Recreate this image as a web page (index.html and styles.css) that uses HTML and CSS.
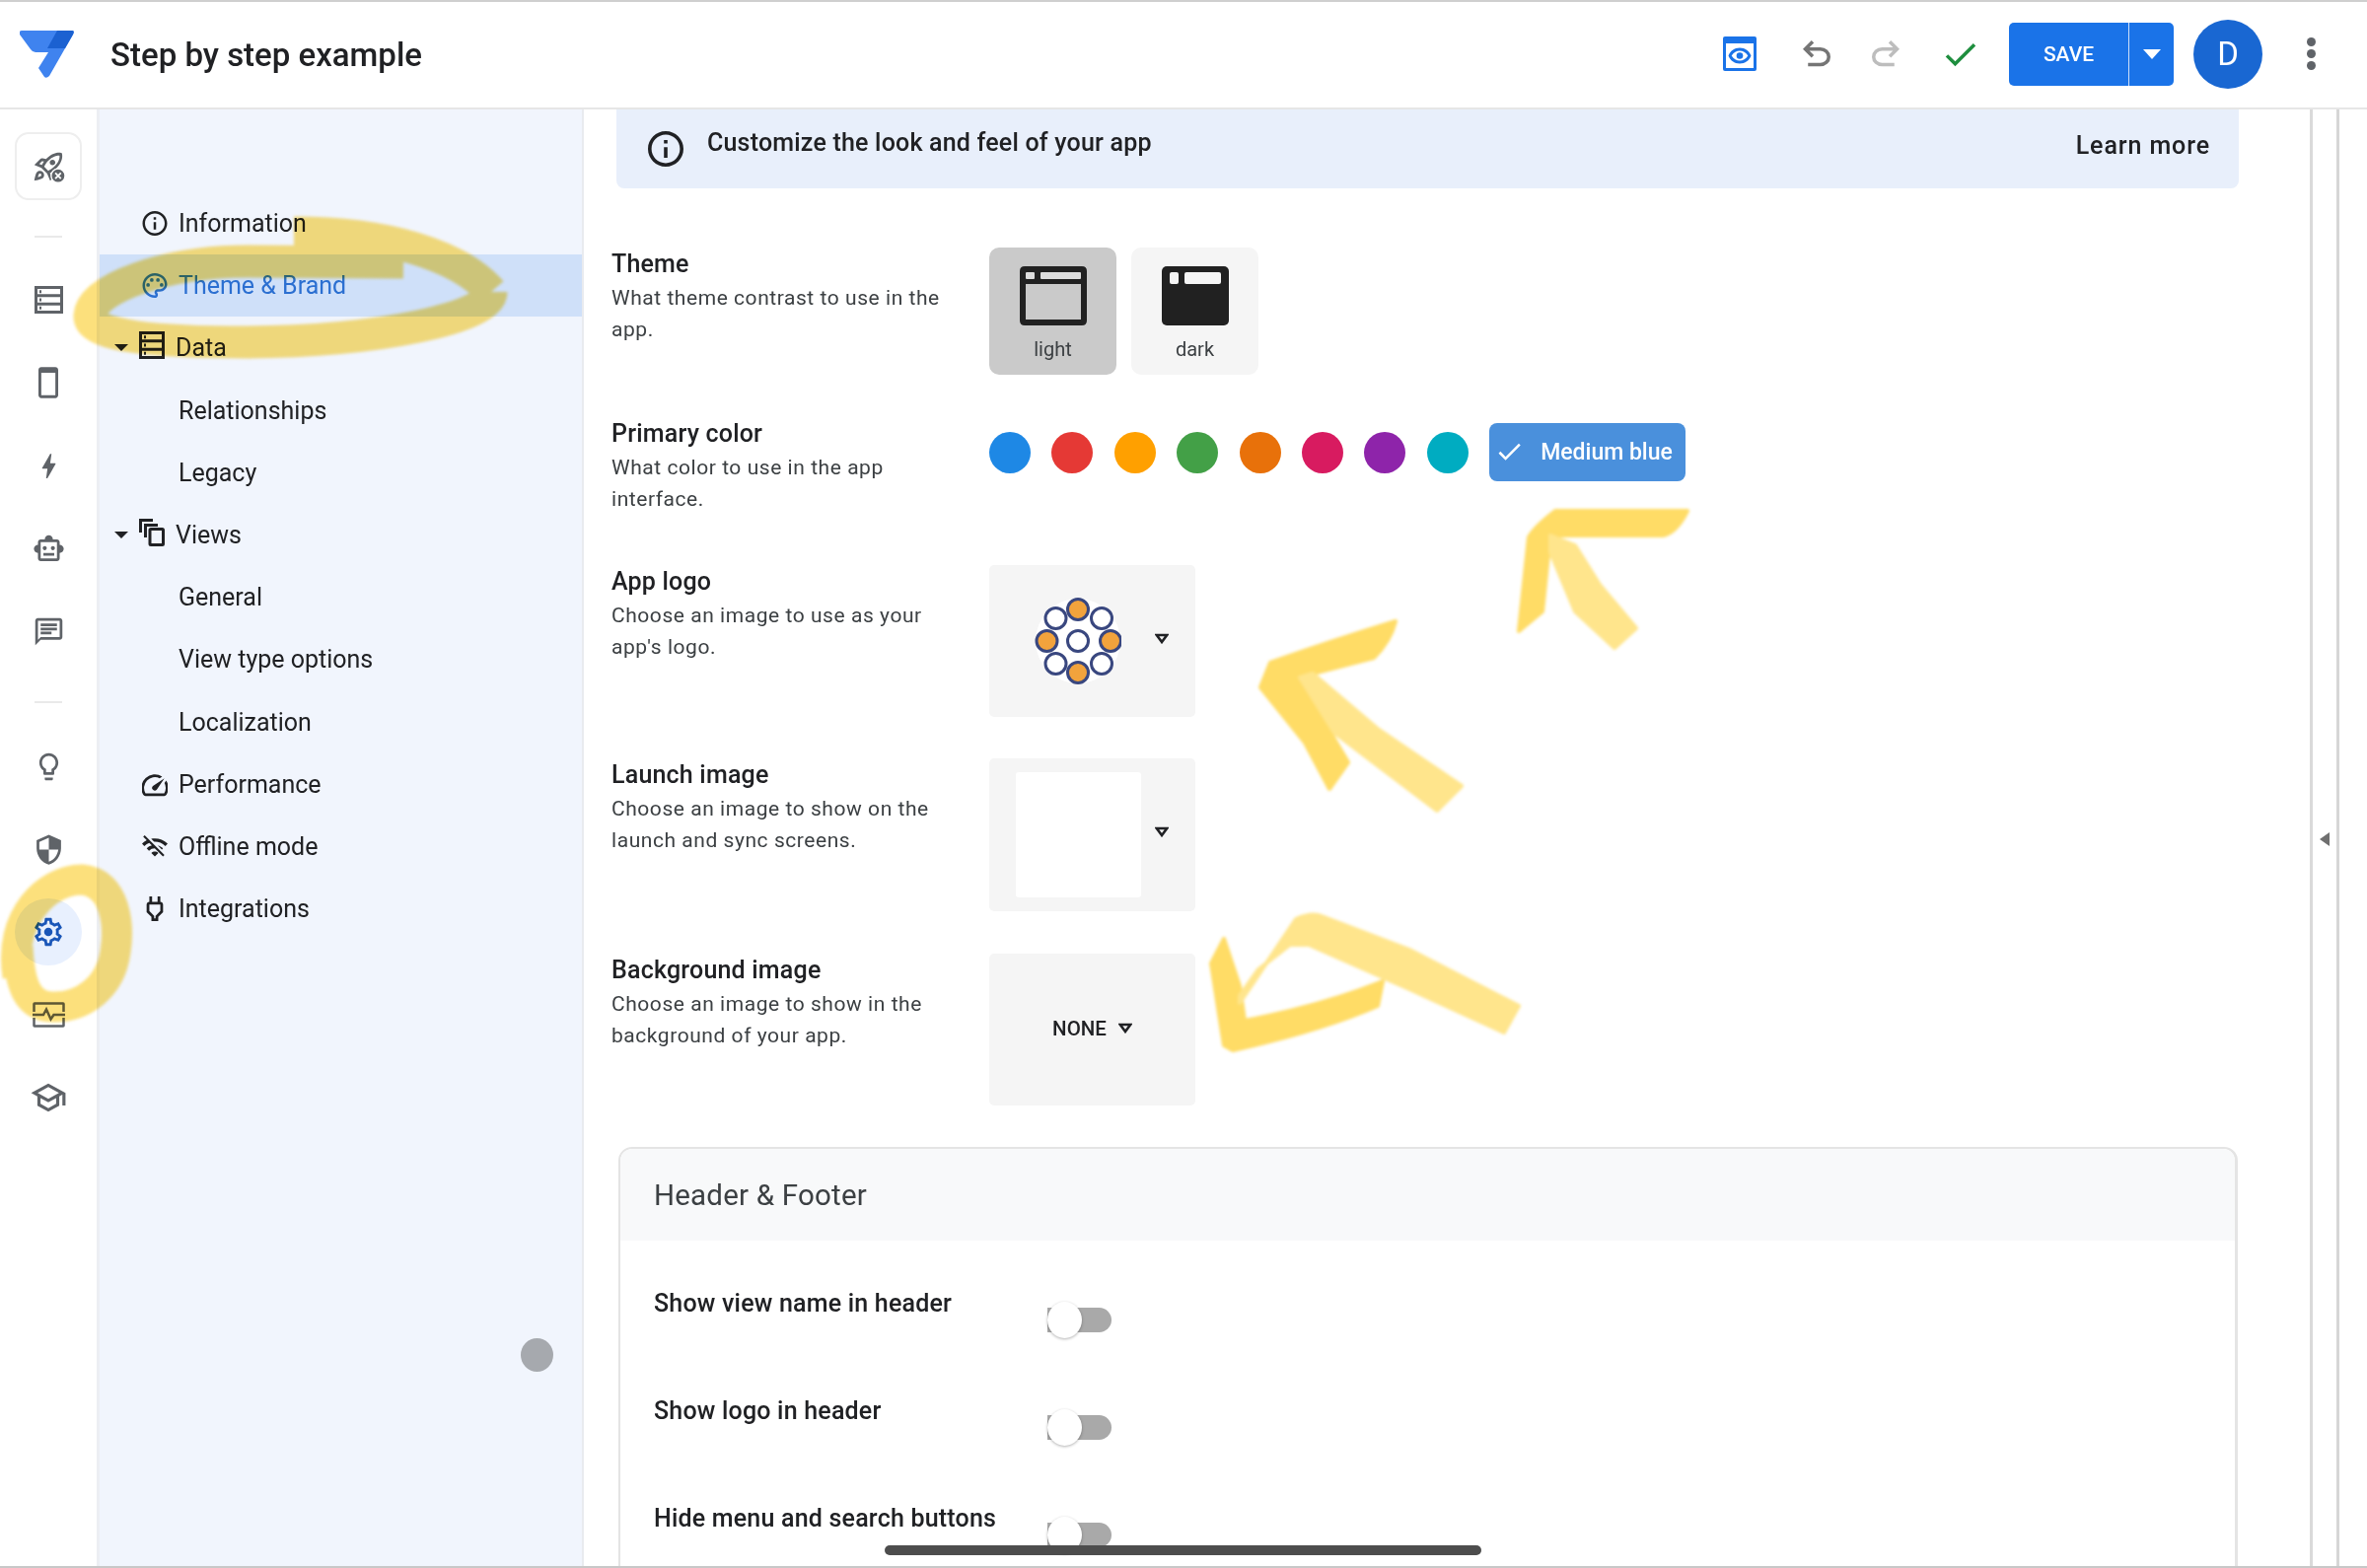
FILE: index.html
```html
<!DOCTYPE html>
<html>
<head>
<meta charset="utf-8">
<title>Step by step example</title>
<link rel="stylesheet" href="styles.css">
</head>
<body>

<!-- start:topbar -->
<div class="topbar">
	<svg class="logo" viewBox="20 32 56 49">
		<path fill="#3f83ef" d="M22 32H73Q76 32 74 36L50 78Q47 81 45 79L39 70L49 54H36Q33 54 31 51L20 36Q19 32 22 32Z"/>
		<path fill="#1b61d1" d="M58 32H73Q76 32 74 36L66 50H48Z"/>
	</svg>
	<div class="app_title">Step by step example</div>
	<div class="top_actions">
		<svg class="preview" viewBox="0 0 34 35">
			<rect width="34" height="35" rx="2" fill="#1a73e8"/>
			<rect x="3" y="7" width="28" height="25" fill="#fff"/>
			<path fill="#1a73e8" d="M17 11.5c-5.5 0-9.6 3.2-11.5 8 1.900 4.800 6 8 11.500 8s9.600-3.200 11.500-8c-1.900-4.800-6-8-11.500-8zm0 13c-3.200 0-6.200-1.800-8.300-5 2.100-3.200 5.100-5 8.300-5s6.200 1.800 8.300 5c-2.100 3.200-5.100 5-8.300 5z"/>
			<circle cx="17" cy="19.500" r="3.300" fill="#1a73e8"/>
		</svg>
		<svg class="undo" viewBox="0 -960 960 960"><path d="M280-200v-80h284q63 0 109.500-40T720-420q0-60-46.500-100T564-560H312l104 104-56 56-200-200 200-200 56 56-104 104h252q97 0 166.500 63T800-420q0 94-69.500 157T564-200H280Z"/></svg>
		<svg class="redo" viewBox="0 -960 960 960"><path d="M396-200q-97 0-166.500-63T160-420q0-94 69.500-157T396-640h252L544-744l56-56 200 200-200 200-56-56 104-104H396q-63 0-109.500 40T240-420q0 60 46.500 100T396-280h284v80H396Z"/></svg>
		<svg class="saved" viewBox="3 5 19 15"><path d="M9 16.170L4.830 12l-1.420 1.410L9 19 21 7l-1.410-1.410z"/></svg>
		<div class="save_btn">
			<span class="save_label">SAVE</span>
			<span class="save_drop"><i class="tri_down"></i></span>
		</div>
		<div class="avatar">D</div>
		<div class="more"><i></i><i></i><i></i></div>
	</div>
</div>
<!-- end:topbar -->

<div class="layout">

	<!-- start:rail -->
	<div class="rail">
		<div class="rail_btn">
			<svg class="rocket" viewBox="0 0 24 24">
				<path d="M6 15c-.83 0-1.580.34-2.120.88C2.700 17.060 2 22 2 22s4.940-.7 6.120-1.880c.54-.54.88-1.290.88-2.120 0-1.660-1.340-3-3-3zm.71 3.710c-.28.28-2.170.76-2.170.76s.47-1.880.76-2.170c.17-.19.42-.3.7-.3.55 0 1 .45 1 1 0 .28-.11.53-.29.71zm10.710-5.060c6.360-6.360 4.240-11.310 4.240-11.310S16.710.22 10.350 6.580l-2.490-.5c-.65-.13-1.330.08-1.810.55L2 10.690l5 2.140L11.170 17l2.140 5 4.050-4.050c.47-.47.68-1.150.55-1.810l-.49-2.490zM7.410 10.830l-1.910-.82 1.970-1.970 1.440.29c-.57.83-1.080 1.700-1.500 2.500zm6.580 7.670l-.82-1.910c.8-.42 1.670-.93 2.490-1.500l.29 1.440-1.960 1.970zM16 12.240c-1.320 1.320-3.380 2.400-4.040 2.730l-2.930-2.930c.32-.65 1.400-2.710 2.730-4.040 4.680-4.680 8.230-3.850 8.230-3.850s.83 3.550-3.990 8.090zM15 11c1.100 0 2-.9 2-2s-.9-2-2-2-2 .9-2 2 .9 2 2 2z"/>
				<circle cx="19" cy="18.500" r="5" fill="#5f6368" stroke="#fff"/>
				<path d="M17 16.500l4 4m0-4l-4 4" stroke="#fff" stroke-width="1.300"/>
			</svg>
		</div>
		<div class="rail_sep first"></div>
		<div class="rail_item"><svg class="ic_line" viewBox="0 0 29 28"><path d="M1.500 1.500h26v25h-26zM1.500 9.800h26M1.500 18.200h26"/><path class="dots" d="M5 5.700h2M5 14h2M5 22.300h2"/></svg></div>
		<div class="rail_item"><svg class="ic phone" viewBox="5 1 14 22"><path d="M17 1.010L7 1c-1.100 0-2 .9-2 2v18c0 1.100.9 2 2 2h10c1.100 0 2-.9 2-2V3c0-1.100-.9-1.990-2-1.990zM17 21H7V5h10v16z"/></svg></div>
		<div class="rail_item"><svg class="ic" viewBox="0 0 24 24"><path d="M11 21h-1l1-7H7.500c-.58 0-.57-.32-.38-.66.19-.34.05-.08.07-.12C8.480 10.940 10.420 7.540 13 3h1l-1 7h3.500c.49 0 .56.33.47.51l-.07.15C12.960 17.550 11 21 11 21z"/></svg></div>
		<div class="rail_item"><svg class="ic" viewBox="0 0 24 24"><path d="M20 9V7c0-1.100-.9-2-2-2h-3c0-1.660-1.340-3-3-3S9 3.340 9 5H6c-1.100 0-2 .9-2 2v2c-1.660 0-3 1.340-3 3s1.340 3 3 3v4c0 1.100.9 2 2 2h12c1.100 0 2-.9 2-2v-4c1.660 0 3-1.340 3-3s-1.340-3-3-3zm-2 10H6V7h12v12zm-9-6c-.83 0-1.500-.67-1.500-1.500S8.170 10 9 10s1.500.67 1.500 1.500S9.830 13 9 13zm7.500-1.500c0 .83-.67 1.500-1.500 1.500s-1.500-.67-1.500-1.500.67-1.500 1.500-1.500 1.500.67 1.500 1.500zM8 15h8v2H8v-2z"/></svg></div>
		<div class="rail_item"><svg class="ic" viewBox="0 0 24 24"><path d="M20 2H4c-1.100 0-2 .9-2 2v18l4-4h14c1.100 0 2-.9 2-2V4c0-1.100-.9-2-2-2zm0 14H6l-2 2V4h16v12zM6 6h12v2H6zm0 3h12v2H6zm0 3h8v2H6z"/></svg></div>
		<div class="rail_sep"></div>
		<div class="rail_item"><svg class="ic" viewBox="0 0 24 24"><path d="M9 21c0 .55.45 1 1 1h4c.55 0 1-.45 1-1v-1H9v1zm3-19C8.140 2 5 5.140 5 9c0 2.380 1.190 4.470 3 5.740V17c0 .55.45 1 1 1h6c.55 0 1-.45 1-1v-2.260c1.810-1.270 3-3.360 3-5.740 0-3.860-3.140-7-7-7zm2.850 11.100l-.85.6V16h-4v-2.300l-.85-.6C7.800 12.160 7 10.630 7 9c0-2.760 2.240-5 5-5s5 2.240 5 5c0 1.630-.8 3.160-2.150 4.100z"/></svg></div>
		<div class="rail_item"><svg class="ic" viewBox="0 0 24 24"><path d="M12 1L3 5v6c0 5.550 3.840 10.740 9 12 5.160-1.260 9-6.450 9-12V5l-9-4zm0 10.990h7c-.53 4.120-3.280 7.790-7 8.940V12H5V6.300l7-3.110v8.800z"/></svg></div>
		<div class="rail_item">
			<div class="rail_active">
				<svg class="ic gear" viewBox="0 0 24 24">
					<path d="M19.430 12.980c.04-.32.07-.64.07-.98 0-.34-.03-.66-.07-.98l2.110-1.650c.19-.15.24-.42.12-.64l-2-3.460c-.09-.16-.26-.25-.44-.25-.06 0-.12.01-.17.03l-2.490 1c-.52-.4-1.080-.73-1.690-.98l-.38-2.650C14.460 2.180 14.250 2 14 2h-4c-.25 0-.46.18-.49.42l-.38 2.650c-.61.25-1.170.59-1.690.98l-2.490-1c-.06-.02-.12-.03-.18-.03-.17 0-.34.09-.43.25l-2 3.460c-.13.22-.07.49.12.64l2.110 1.650c-.04.32-.07.65-.07.98 0 .33.03.66.07.98l-2.110 1.650c-.19.15-.24.42-.12.64l2 3.460c.09.16.26.25.44.25.06 0 .12-.01.17-.03l2.490-1c.52.4 1.080.73 1.690.98l.38 2.650c.03.24.24.42.49.42h4c.25 0 .46-.18.49-.42l.38-2.650c.61-.25 1.170-.59 1.690-.98l2.490 1c.06.02.12.03.18.03.17 0 .34-.09.43-.25l2-3.460c.12-.22.07-.49-.12-.64l-2.110-1.650zm-1.980-1.710c.04.31.05.52.05.73 0 .21-.02.43-.05.73l-.14 1.130.89.7 1.080.84-.7 1.210-1.270-.51-1.040-.42-.9.68c-.43.32-.84.56-1.250.73l-1.060.43-.16 1.130-.2 1.350h-1.400l-.19-1.350-.16-1.130-1.060-.43c-.43-.18-.83-.41-1.230-.71l-.91-.7-1.060.43-1.270.51-.7-1.210 1.080-.84.89-.7-.14-1.130c-.03-.31-.05-.54-.05-.74s.02-.43.05-.73l.14-1.130-.89-.7-1.080-.84.7-1.210 1.270.51 1.040.42.9-.68c.43-.32.84-.56 1.250-.73l1.060-.43.16-1.130.2-1.350h1.390l.19 1.350.16 1.130 1.060.43c.43.18.83.41 1.230.71l.91.7 1.060-.43 1.270-.51.7 1.210-1.070.85-.89.7.14 1.130z"/>
					<circle cx="12" cy="12" r="3"/>
				</svg>
			</div>
		</div>
		<div class="rail_item"><svg class="ic_line wide" viewBox="0 0 33 26"><path d="M1.500 10V2q0-.5.5-.5h29q.5 0 .5.5v8M1.500 16v8q0 .5.5.5h29q.5 0 .5-.5v-8M0 13h11l3-5.500 4.500 10 3-4.500H33"/></svg></div>
		<div class="rail_item"><svg class="ic school" viewBox="0 0 24 24"><path d="M12 3L1 9l4 2.180v6L12 21l7-3.820v-6l2-1.090V17h2V9L12 3zm6.820 6L12 12.720 5.180 9 12 5.280 18.820 9zM17 15.990l-5 2.730-5-2.730v-3.720L12 15l5-2.730v3.720z"/></svg></div>
	</div>
	<!-- end:rail -->

	<!-- start:nav -->
	<div class="nav">
		<div class="nav_row">
			<svg class="nav_ic" viewBox="2 2 20 20"><path d="M11 7h2v2h-2zm0 4h2v6h-2zm1-9C6.480 2 2 6.480 2 12s4.480 10 10 10 10-4.480 10-10S17.520 2 12 2zm0 18c-4.410 0-8-3.590-8-8s3.590-8 8-8 8 3.590 8 8-3.590 8-8 8z"/></svg>
			Information
		</div>
		<div class="nav_row selected">
			<svg class="nav_ic" viewBox="2 2 20 20"><path d="M12 22C6.490 22 2 17.510 2 12S6.490 2 12 2s10 4.040 10 9c0 3.310-2.690 6-6 6h-1.770c-.28 0-.5.22-.5.5 0 .12.05.23.13.33.41.47.64 1.060.64 1.670 0 1.380-1.120 2.500-2.500 2.500zm0-18c-4.410 0-8 3.590-8 8s3.590 8 8 8c.28 0 .5-.22.5-.5 0-.16-.08-.28-.14-.35-.41-.46-.63-1.050-.63-1.650 0-1.380 1.120-2.500 2.500-2.500H16c2.210 0 4-1.790 4-4 0-3.860-3.590-7-8-7z"/><circle cx="6.500" cy="11.500" r="1.500"/><circle cx="9.500" cy="7.500" r="1.500"/><circle cx="14.500" cy="7.500" r="1.500"/><circle cx="17.500" cy="11.500" r="1.500"/></svg>
			Theme &amp; Brand
		</div>
		<div class="nav_row group">
			<i class="caret"></i>
			<svg class="group_ic" viewBox="0 0 26 28"><path d="M1.500 1.500h23v25h-23zM1.500 9.800h23M1.500 18.200h23"/><path class="dots" d="M5 5.700h2M5 14h2M5 22.300h2"/></svg>
			Data
		</div>
		<div class="nav_row sub">Relationships</div>
		<div class="nav_row sub">Legacy</div>
		<div class="nav_row group">
			<i class="caret"></i>
			<svg class="group_ic" viewBox="0 0 26 28"><path d="M1.500 14V1.500H14M6.500 19V6.500H19M12 10.500h11.500q1 0 1 1v14q0 1-1 1H12q-1 0-1-1v-14q0-1 1-1z"/></svg>
			Views
		</div>
		<div class="nav_row sub">General</div>
		<div class="nav_row sub">View type options</div>
		<div class="nav_row sub">Localization</div>
		<div class="nav_row">
			<svg class="nav_ic" viewBox="2.500 3 19 17"><path d="M20.380 8.570l-1.230 1.850a8 8 0 0 1-.22 7.580H5.070A8 8 0 0 1 15.580 6.850l1.850-1.230A10 10 0 0 0 3.350 19a2 2 0 0 0 1.720 1h13.850a2 2 0 0 0 1.740-1 10 10 0 0 0-.27-10.440zm-9.790 6.840a2 2 0 0 0 2.830 0l5.660-8.490-8.490 5.660a2 2 0 0 0 0 2.830z"/></svg>
			Performance
		</div>
		<div class="nav_row">
			<svg class="nav_ic" viewBox="1 2 22 19"><path d="M22.990 9C19.150 5.160 13.800 3.760 8.840 4.780l2.520 2.520c3.470-.17 6.990 1.050 9.630 3.700l2-2zm-4 4c-1.290-1.290-2.840-2.130-4.490-2.560l3.530 3.530.96-.97zM2 3.050L5.070 6.100C3.600 6.820 2.220 7.780 1 9l1.990 2c1.240-1.240 2.670-2.160 4.200-2.770l2.240 2.240C7.810 10.890 6.270 11.730 5 13v.01L6.990 15c1.360-1.360 3.140-2.040 4.920-2.060L18.980 20l1.270-1.260L3.290 1.790 2 3.050zM9 17l3 3 3-3c-1.650-1.660-4.340-1.660-6 0z"/></svg>
			Offline mode
		</div>
		<div class="nav_row">
			<svg class="nav_ic" viewBox="3 3 18 18"><path d="M16 7V3h-2v4h-4V3H8v4h-.01C6.900 6.990 6 7.890 6 8.980v5.520L9.500 18v3h5v-3l3.500-3.500V9c0-1.100-.9-2-2-2zm0 6.670l-3.500 3.510V19h-1v-1.820L8 13.670V9h8v4.670z"/></svg>
			Integrations
		</div>
		<div class="nav_handle"></div>
	</div>
	<!-- end:nav -->

	<!-- start:main -->
	<div class="main">
		<div class="banner">
			<svg class="banner_ic" viewBox="2 2 20 20"><path d="M11 7h2v2h-2zm0 4h2v6h-2zm1-9C6.480 2 2 6.480 2 12s4.480 10 10 10 10-4.480 10-10S17.520 2 12 2zm0 18c-4.410 0-8-3.590-8-8s3.590-8 8-8 8 3.590 8 8-3.590 8-8 8z"/></svg>
			<span class="banner_text">Customize the look and feel of your app</span>
			<span class="learn">Learn more</span>
		</div>

		<div class="setting theme_row">
			<div class="setting_text">
				<h2>Theme</h2>
				<p>What theme contrast to use in the app.</p>
			</div>
			<div class="theme_opts">
				<div class="theme_opt on">
					<svg class="theme_ic" viewBox="0 0 68 60">
						<path fill="#212121" fill-rule="evenodd" d="M5 0h58q5 0 5 5v50q0 5-5 5H5q-5 0-5-5V5q0-5 5-5zM6 18v36h56V18z"/>
						<rect x="6" y="6" width="9" height="7" rx="1" fill="#ddd"/><rect x="21" y="6" width="41" height="7" rx="1" fill="#ddd"/>
					</svg>
					<span>light</span>
				</div>
				<div class="theme_opt">
					<svg class="theme_ic" viewBox="0 0 68 60">
						<rect width="68" height="60" rx="5" fill="#212121"/>
						<rect x="8" y="6" width="9" height="12" rx="2" fill="#f5f5f5"/><rect x="23" y="6" width="37" height="12" rx="2" fill="#f5f5f5"/>
					</svg>
					<span>dark</span>
				</div>
			</div>
		</div>

		<div class="setting color_row">
			<div class="setting_text">
				<h2>Primary color</h2>
				<p>What color to use in the app interface.</p>
			</div>
			<div class="swatches">
				<i class="swatch c1"></i><i class="swatch c2"></i><i class="swatch c3"></i><i class="swatch c4"></i>
				<i class="swatch c5"></i><i class="swatch c6"></i><i class="swatch c7"></i><i class="swatch c8"></i>
				<div class="color_pick">
					<svg class="pick_ic" viewBox="3 5 19 15"><path d="M9 16.170L4.830 12l-1.420 1.410L9 19 21 7l-1.410-1.410z"/></svg>
					Medium blue
				</div>
			</div>
		</div>

		<div class="setting logo_row">
			<div class="setting_text">
				<h2>App logo</h2>
				<p>Choose an image to use as your app's logo.</p>
			</div>
			<div class="img_box">
				<svg class="dots_logo" viewBox="0 0 88 88">
					<circle cx="44" cy="44" r="43" fill="#fff"/>
					<g stroke="#39477f" stroke-width="3" fill="#fff">
						<circle cx="44" cy="12" r="10.500" class="dot_on"/>
						<circle cx="21.500" cy="21" r="10.500"/>
						<circle cx="68" cy="21" r="10.500"/>
						<circle cx="12.500" cy="44" r="10.500" class="dot_on"/>
						<circle cx="44" cy="44" r="10.500"/>
						<circle cx="77" cy="44" r="10.500" class="dot_on"/>
						<circle cx="21.500" cy="67" r="10.500"/>
						<circle cx="68" cy="67" r="10.500"/>
						<circle cx="44" cy="76" r="10.500" class="dot_on"/>
					</g>
				</svg>
				<svg class="drop" viewBox="0 0 16 12"><path d="M2 2h12L8 10z"/></svg>
			</div>
		</div>

		<div class="setting launch_row">
			<div class="setting_text">
				<h2>Launch image</h2>
				<p>Choose an image to show on the launch and sync screens.</p>
			</div>
			<div class="img_box">
				<div class="blank_img"></div>
				<svg class="drop" viewBox="0 0 16 12"><path d="M2 2h12L8 10z"/></svg>
			</div>
		</div>

		<div class="setting bg_row">
			<div class="setting_text">
				<h2>Background image</h2>
				<p>Choose an image to show in the background of your app.</p>
			</div>
			<div class="img_box center">
				<span class="none">NONE</span>
				<svg class="drop" viewBox="0 0 16 12"><path d="M2 2h12L8 10z"/></svg>
			</div>
		</div>

		<div class="card">
			<div class="card_head">Header &amp; Footer</div>
			<div class="card_body">
				<div class="toggle_row"><span>Show view name in header</span><div class="toggle"></div></div>
				<div class="toggle_row"><span>Show logo in header</span><div class="toggle"></div></div>
				<div class="toggle_row"><span>Hide menu and search buttons</span><div class="toggle"></div></div>
			</div>
		</div>
	</div>
	<!-- end:main -->

	<div class="side_panel"><i class="tri_left"></i></div>
	<div class="side_rest"></div>
</div>

<div class="h_scroll"></div>

<!-- marker strokes drawn over the screenshot -->
<svg class="marker" viewBox="0 0 2400 1590">
	<g fill="none" class="ink" stroke-width="33">
		<path d="M298 236C390 236 465 258 498 296"/>
		<path d="M498 296C498 322 385 346 250 347C165 347 90 342 91 320C93 292 170 265 250 265L409 266"/>
		<path d="M18 990C8 930 48 892 83 892C118 895 121 940 117 965C112 1002 83 1022 53 1021C28 1020 20 1000 18 960" stroke-width="31"/>
	</g>
	<g class="ink_fill">
		<path d="M1711 518H1577Q1555 535 1550 545L1540 640L1564 620L1572 543H1686Q1700 540 1711 518Z"/>
		<path d="M1415 630Q1350 650 1288 672L1278 697L1323 753L1348 800L1367 773L1316 687L1393 667Q1410 650 1415 630Z"/>
		<path d="M1241 952L1228 977L1241 1060L1250 1065Q1340 1045 1397 1020L1402 995Q1340 1020 1262 1035L1257 1000Z"/>
	</g>
	<g class="ink_fill light">
		<path d="M1572 543L1597 553L1622 593L1659 637L1637 657L1597 620L1572 560Z"/>
		<path d="M1318 687L1353 743L1457 822L1482 797L1398 740L1331 683Z"/>
		<path d="M1257 1017L1314 932Q1330 925 1340 929L1429 963L1540 1020L1525 1047L1429 1003L1327 958H1308L1276 983L1257 1010Z"/>
	</g>
</svg>

</body>
</html>
```

FILE: styles.css
```css
* {box-sizing: border-box;}
html, body {margin: 0; padding: 0; height: 100%;}
body {position: relative; width: 2400px; height: 1590px; overflow: hidden; background: #fff; border-top: 2px solid #cfcfcf; border-bottom: 2px solid #c8c8c8; font-family: Roboto, "Liberation Sans", sans-serif; color: #202124;}
i {display: block;}
h2, p {margin: 0;}

/* ---------- TOP BAR ---------- */
.topbar {display: flex; align-items: center; height: 109px; border-bottom: 2px solid #e6e6e6;}
.logo {width: 56px; height: 49px; margin-left: 20px; flex: none;}
.app_title {margin: 0 0 0 36px; font-size: 33px; font-weight: 500; letter-spacing: 0; color: #202124;}
.top_actions {display: flex; align-items: center; margin-left: auto; height: 100%;}
.preview {width: 34px; height: 35px; margin-top: -2px;}
.undo, .redo {width: 42px; height: 42px; margin-top: -1px;}
.undo {fill: #757575; margin-left: 40px;}
.redo {fill: #bdbdbd; margin-left: 28px;}
.saved {width: 33px; height: 26px; margin-left: 39px; fill: #1e8e3e;}
.save_btn {display: flex; height: 64px; width: 167px; margin: -2px 0 0 32px; background: #1a73e8; border-radius: 5px; color: #fff;}
.save_label {width: 122px; line-height: 64px; text-align: center; font-size: 21px; font-weight: 500; border-right: 1px solid #cfe0f9;}
.save_drop {flex: 1; display: flex; align-items: center; justify-content: center;}
.tri_down {width: 0; height: 0; border-left: 9px solid transparent; border-right: 9px solid transparent; border-top: 10px solid #fff;}
.avatar {width: 70px; height: 70px; margin: -2px 0 0 20px; border-radius: 50%; background: #1967d2; color: #fff; font-size: 33px; line-height: 70px; text-align: center;}
.more {display: flex; flex-direction: column; gap: 3px; margin: -2px 52px 0 45px;}
.more i {width: 9px; height: 9px; border-radius: 50%; background: #5f6368;}

/* ---------- STRUCTURE ---------- */
.layout {display: flex; height: 1477px;}
.rail {width: 98px; flex: none; padding-top: 23px; display: flex; flex-direction: column; align-items: center;}
.nav {position: relative; width: 494px; flex: none; padding-top: 84px; background: #f1f5fd; border-left: 3px solid #eceef3; border-right: 2px solid #e9ebef;}
.main {width: 1753px; flex: none; padding-left: 28px; overflow: hidden; border-right: 3px solid #dadada;}
.side_panel {width: 27px; flex: none; display: flex; align-items: center; justify-content: center; padding-top: 3px; border-right: 3px solid #d6d6d6;}
.side_rest {flex: 1;}
.tri_left {width: 0; height: 0; border-top: 7px solid transparent; border-bottom: 7px solid transparent; border-right: 10px solid #6f6f6f;}

/* ---------- RAIL ---------- */
.rail_btn {width: 68px; height: 69px; border: 2px solid #eeeeee; border-radius: 14px; display: flex; align-items: center; justify-content: center;}
.rocket {width: 34px; height: 34px; fill: #5f6368;}
.rail_sep {width: 28px; height: 2px; margin: 29px 0 22px; background: #e9e9e9;}
.rail_sep.first {margin: 36px 0 21px;}
.rail_item {height: 84px; width: 100%; display: flex; align-items: center; justify-content: center;}
.ic {width: 33px; height: 33px; fill: #5f6368;}
.phone {width: 20px; height: 32px;}
.school {width: 38px; height: 38px;}
.ic_line {width: 29px; height: 28px; fill: none; stroke: #5f6368; stroke-width: 3;}
.ic_line.wide {width: 33px; height: 26px; stroke-width: 2.500;}
.rail_active {width: 68px; height: 68px; border-radius: 50%; background: #e8f0fe; display: flex; align-items: center; justify-content: center;}
.gear {width: 34px; height: 34px; fill: #1a56b8;}

/* ---------- NAV ---------- */
.nav_row {display: flex; align-items: center; height: 63.200px; padding-left: 43px; font-size: 25px; color: #202124;}
.nav_ic {width: 26px; height: 25px; margin-right: 11px; fill: #202124;}
.nav_row.selected {background: #cfe0f9; color: #2b6fd1;}
.nav_row.selected .nav_ic {fill: #2b6fd1;}
.nav_row.sub {padding-left: 80px;}
.nav_row.group {padding-left: 15px;}
.caret {width: 0; height: 0; margin-right: 12px; border-left: 7px solid transparent; border-right: 7px solid transparent; border-top: 7px solid #202124;}
.group_ic {width: 26px; height: 28px; margin: -6px 11px 0 -1px; fill: none; stroke: #202124; stroke-width: 3;}
.nav_handle {position: absolute; left: 427px; top: 1246px; width: 33px; height: 34px; border-radius: 50%; background: #a6a9ae;}

/* ---------- BANNER ---------- */
.banner {display: flex; align-items: center; width: 1645px; height: 80px; margin: 0 0 60px 5px; padding: 0 29px 0 32px; background: #e8effb; border-radius: 0 0 8px 8px; font-size: 25px; font-weight: 500; color: #202124;}
.banner_ic {width: 36px; height: 36px; margin-right: 24px; fill: #202124;}
.banner_text {margin-top: -13px; letter-spacing: .2px;}
.learn {margin: -7px 0 0 auto; letter-spacing: .9px;}

/* ---------- SETTINGS ---------- */
.setting {display: flex; margin-bottom: 42px;}
.theme_row {height: 130px;}
.color_row {height: 108px;}
.logo_row {height: 154px;}
.launch_row {height: 156px;}
.bg_row {height: 154px;}
.setting_text {width: 383px; flex: none; padding-right: 20px;}
.setting_text h2 {margin-bottom: 1px; font-size: 25px; font-weight: 500; line-height: 34px; letter-spacing: .2px; color: #202124;}
.setting_text p {font-size: 21px; line-height: 32px; letter-spacing: .55px; color: #3c4043;}
.theme_opts {display: flex; gap: 15px;}
.theme_opt {width: 129px; height: 129px; padding-top: 19px; border-radius: 10px; background: #f5f5f5; display: flex; flex-direction: column; align-items: center; font-size: 20px; color: #3c4043;}
.theme_opt.on {background: #cacaca;}
.theme_ic {width: 68px; height: 60px; margin-bottom: 12px;}
.swatches {display: flex; align-items: center; height: 59px; margin-top: 6px;}
.swatch {width: 42px; height: 42px; margin-right: 21.400px; border-radius: 50%;}
.c1 {background: #1e88e5;}
.c2 {background: #e53935;}
.c3 {background: #ffa000;}
.c4 {background: #43a047;}
.c5 {background: #e8710a;}
.c6 {background: #d81b60;}
.c7 {background: #8e24aa;}
.c8 {background: #00acc1;}
.color_pick {display: flex; align-items: center; width: 199px; height: 59px; padding-left: 9px; background: #4a90dc; border-radius: 8px; color: #fff; font-size: 23px; font-weight: 500; white-space: nowrap;}
.pick_ic {width: 24px; height: 19px; margin-right: 19px; fill: #fff;}
.img_box {position: relative; width: 209px; height: 154px; background: #f5f5f5; border-radius: 5px; display: flex; align-items: center;}
.launch_row .img_box {height: 155px;}
.img_box.center {justify-content: center; gap: 12px;}
.dots_logo {width: 88px; height: 88px; margin-left: 46px;}
.dot_on {fill: #f2a33c;}
.blank_img {width: 127px; height: 127px; margin-left: 27px; background: #fff; border-radius: 3px;}
.drop {width: 14px; height: 11px; margin: -6px 0 0 34px; fill: none; stroke: #202124; stroke-width: 3;}
.blank_img + .drop {margin-left: 14px;}
.center .drop {margin: -4px 0 0 0;}
.none {font-size: 20.500px; font-weight: 500; color: #202124; margin-top: -2px;}

/* ---------- CARD ---------- */
.card {width: 1642px; margin-left: 7px; height: 900px; border: 2px solid #e4e4e4; border-right-width: 3px; border-radius: 14px;}
.card_head {height: 93px; padding: 30px 0 0 34px; background: #f8f9fa; border-radius: 12px 12px 0 0; font-size: 29.500px; line-height: 34px; letter-spacing: .2px; color: #3c4043;}
.card_body {padding: 48px 0 0 34px;}
.toggle_row {display: flex; height: 109px; font-size: 25px; font-weight: 500; line-height: 32px; letter-spacing: .2px; color: #202124;}
.toggle_row span {width: 399px; flex: none;}
.toggle {position: relative; width: 65px; height: 25px; margin-top: 20px; background: #a9a9a9; border-radius: 0 13px 13px 0;}
.toggle::before {content: ""; position: absolute; left: 0; top: -6px; width: 35px; height: 37px; border-radius: 50%; background: #fff; box-shadow: 0 1px 3px rgba(0,0,0,.3);}

/* ---------- OVERLAYS ---------- */
.h_scroll {position: absolute; left: 897px; top: 1565px; width: 605px; height: 10px; border-radius: 5px; background: #4d4d4d;}
.marker {position: absolute; left: 0; top: -2px; width: 2400px; height: 1590px; mix-blend-mode: multiply; pointer-events: none; filter: blur(1.500px);}
.ink {stroke: #fce07c;}
.ink_fill {fill: #ffdc66; stroke: #ffdc66; stroke-width: 4; stroke-linejoin: round;}
.ink_fill.light {fill: #ffe58c; stroke: #ffe58c;}
```
